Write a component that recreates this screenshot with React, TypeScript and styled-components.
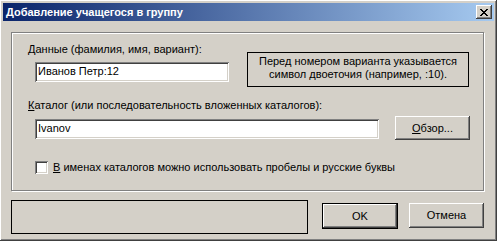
import React from 'react';
import styled, { createGlobalStyle } from 'styled-components';

const Global = createGlobalStyle`
  html, body { margin: 0; padding: 0; background: #d4d0c8; }
  body { font-family: "Liberation Sans", Arial, sans-serif; font-size: 11px; color: #000; }
  * { box-sizing: border-box; }
`;

const raised = `
  background: #d4d0c8;
  box-shadow: inset -1px -1px #404040, inset 1px 1px #ffffff, inset -2px -2px #808080, inset 2px 2px #d4d0c8;
`;

const sunken = `
  background: #ffffff;
  box-shadow: inset 1px 1px #808080, inset -1px -1px #ffffff, inset 2px 2px #404040, inset -2px -2px #d4d0c8;
`;

const Window = styled.div`
  width: 497px;
  height: 241px;
  padding: 3px;
  ${raised}
  display: flex;
  flex-direction: column;
`;

const TitleBar = styled.div`
  height: 18px;
  display: flex;
  align-items: center;
  padding: 0 2px 0 3px;
  background: linear-gradient(to right, #0a246a, #a6caf0);
`;

const TitleText = styled.span`
  color: #ffffff;
  font-weight: bold;
  font-size: 11px;
  line-height: 13px;
`;

const CloseButton = styled.div`
  width: 16px;
  height: 14px;
  margin-left: auto;
  ${raised}
  display: flex;
  align-items: center;
  justify-content: center;
  padding: 0 0 0 0;
`;

const Body = styled.div`
  flex: 1;
  padding: 11px 0 0 8px;
  display: flex;
  flex-direction: column;
`;

const GroupBox = styled.div`
  width: 473px;
  height: 159px;
  border: 1px solid #808080;
  box-shadow: inset 1px 1px #ffffff, 1px 1px #ffffff;
  padding: 10px 0 0 16px;
  display: flex;
  flex-direction: column;
`;

const Row = styled.div<{ $mt?: number }>`
  display: flex;
  align-items: flex-start;
  margin-top: ${(p) => p.$mt ?? 0}px;
`;

const FieldCol = styled.div`
  display: flex;
  flex-direction: column;
`;

const Label = styled.div<{ $mt?: number }>`
  line-height: 13px;
  height: 13px;
  white-space: nowrap;
  margin-top: ${(p) => p.$mt ?? 0}px;
`;

const TextField = styled.div<{ $w: number; $mt: number }>`
  width: ${(p) => p.$w}px;
  height: 20px;
  margin-top: ${(p) => p.$mt}px;
  margin-left: 7px;
  ${sunken}
  padding: 3px 0 0 3px;
  line-height: 13px;
  white-space: nowrap;
`;

const Note = styled.div`
  width: 222px;
  height: 35px;
  margin-left: 18px;
  margin-top: 9px;
  border: 1px solid #000000;
  text-align: center;
  line-height: 13px;
  padding-top: 2px;
`;

const Button = styled.div<{ $w: number; $h: number; $ml: number; $mt: number; $default?: boolean }>`
  width: ${(p) => p.$w}px;
  height: ${(p) => p.$h}px;
  margin-left: ${(p) => p.$ml}px;
  margin-top: ${(p) => p.$mt}px;
  ${raised}
  ${(p) =>
    p.$default
      ? `box-shadow: inset 0 0 0 1px #000000, inset -2px -2px #404040, inset 2px 2px #ffffff, inset -3px -3px #808080;`
      : ''}
  display: flex;
  align-items: center;
  justify-content: center;
  line-height: 13px;
`;

const CheckRow = styled.div`
  display: flex;
  align-items: center;
  margin-top: 21px;
  margin-left: 7px;
`;

const CheckBox = styled.div`
  width: 13px;
  height: 13px;
  ${sunken}
`;

const CheckLabel = styled.span`
  margin-left: 5px;
  line-height: 13px;
  white-space: nowrap;
`;

const BottomRow = styled.div`
  display: flex;
  align-items: flex-start;
  margin-top: 9px;
`;

const StatusBox = styled.div`
  width: 297px;
  height: 34px;
  border: 1px solid #000000;
`;

const CloseGlyph = () => (
  <svg width="8" height="7" viewBox="0 0 8 7" shapeRendering="crispEdges">
    <path
      fill="#000"
      d="M0 0h2v1H0zM6 0h2v1H6zM1 1h2v1H1zM5 1h2v1H5zM2 2h4v1H2zM3 3h2v1H3zM2 4h4v1H2zM1 5h2v1H1zM5 5h2v1H5zM0 6h2v1H0zM6 6h2v1H6z"
    />
  </svg>
);

export default function App() {
  return (
    <>
      <Global />
      <Window>
        <TitleBar>
          <TitleText>Добавление учащегося в группу</TitleText>
          <CloseButton>
            <CloseGlyph />
          </CloseButton>
        </TitleBar>
        <Body>
          <GroupBox>
            <Row>
              <FieldCol>
                <Label>
                  <u>Д</u>анные (фамилия, имя, вариант):
                </Label>
                <TextField $w={194} $mt={6}>
                  Иванов Петр:12
                </TextField>
              </FieldCol>
              <Note>
                Перед номером варианта указывается
                <br />
                символ двоеточия (например, :10).
              </Note>
            </Row>
            <Label $mt={12}>
              <u>К</u>аталог (или последовательность вложенных каталогов):
            </Label>
            <Row>
              <TextField $w={344} $mt={7}>
                Ivanov
              </TextField>
              <Button $w={75} $h={24} $ml={16} $mt={4}>
                <span>
                  <u>О</u>бзор...
                </span>
              </Button>
            </Row>
            <CheckRow>
              <CheckBox />
              <CheckLabel>
                <u>В</u> именах каталогов можно использовать пробелы и русские буквы
              </CheckLabel>
            </CheckRow>
          </GroupBox>
          <BottomRow>
            <StatusBox />
            <Button $w={76} $h={26} $ml={14} $mt={3} $default>
              OK
            </Button>
            <Button $w={75} $h={25} $ml={11} $mt={3}>
              Отмена
            </Button>
          </BottomRow>
        </Body>
      </Window>
    </>
  );
}
